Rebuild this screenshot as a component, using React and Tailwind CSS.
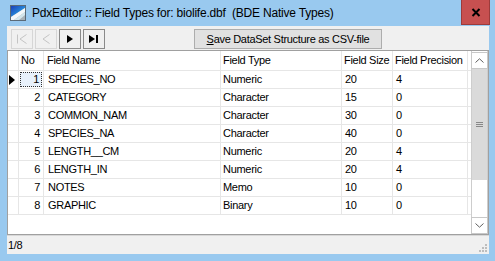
import React from 'react';

const rows = [
  { no: 1, name: 'SPECIES_NO', type: 'Numeric', size: 20, prec: 4 },
  { no: 2, name: 'CATEGORY', type: 'Character', size: 15, prec: 0 },
  { no: 3, name: 'COMMON_NAM', type: 'Character', size: 30, prec: 0 },
  { no: 4, name: 'SPECIES_NA', type: 'Character', size: 40, prec: 0 },
  { no: 5, name: 'LENGTH__CM', type: 'Numeric', size: 20, prec: 4 },
  { no: 6, name: 'LENGTH_IN', type: 'Numeric', size: 20, prec: 4 },
  { no: 7, name: 'NOTES', type: 'Memo', size: 10, prec: 0 },
  { no: 8, name: 'GRAPHIC', type: 'Binary', size: 10, prec: 0 },
];

const AppIcon = () => (
  <svg width="16" height="16" viewBox="0 0 16 16">
    <defs>
      <linearGradient id="blu" x1="0" y1="0" x2="1" y2="1">
        <stop offset="0" stopColor="#1c3fb8" />
        <stop offset="1" stopColor="#2ec0f0" />
      </linearGradient>
    </defs>
    <rect x="0.5" y="0.5" width="15" height="15" fill="#a9b2b8" stroke="#5a6a78" />
    <polygon points="1,1 15,1 15,3 1,12" fill="url(#blu)" />
    <polygon points="1,12 15,3 15,7 4,15 1,15" fill="#f4f8fa" />
    <polygon points="4,15 15,7 15,10 9,15" fill="#d4e6ec" />
  </svg>
);

const NavButton = ({ enabled, children }) => (
  <div
    className={`w-[22px] h-[20px] border flex items-center justify-center ${
      enabled ? 'border-[#8a8a8a]' : 'border-[#d6d6d6]'
    }`}
  >
    <svg width="20" height="18" viewBox="0 0 20 18">
      {children}
    </svg>
  </div>
);

const Cell = ({ w, className = '', children }) => (
  <div className={`${w} h-full border-r border-[#e6e6e6] flex items-center shrink-0 ${className}`}>
    {children}
  </div>
);

export default function App() {
  return (
    <div className="w-[495px] h-[261px] bg-[#99c9ef] flex flex-col overflow-hidden text-black font-['Liberation_Sans',Arial,sans-serif] text-[11px] tracking-[-0.3px]">
      {/* title bar */}
      <div className="h-[26px] flex shrink-0">
        <div className="flex-1 flex items-center pl-[10px]">
          <AppIcon />
          <span className="ml-[6px] text-[12px] tracking-[-0.2px] whitespace-pre">
            PdxEditor :: Field Types for: biolife.dbf  (BDE Native Types)
          </span>
        </div>
        <div className="w-[29px] h-[25px] mr-[5px] bg-[#c75050] border border-t-0 border-[#9c3b3b] flex items-center justify-center">
          <svg width="10" height="9" viewBox="0 0 10 9">
            <path d="M1.5 1 L8.5 8 M8.5 1 L1.5 8" stroke="#000" strokeWidth="2" />
          </svg>
        </div>
      </div>

      {/* client */}
      <div className="flex-1 ml-[7px] mr-[6px] mb-[7px] bg-[#f0f0f0] flex flex-col">
        {/* toolbar */}
        <div className="h-[24px] shrink-0 flex items-start pt-[3px] pl-[4px]">
          <div className="flex gap-[2px]">
            <NavButton>
              <path d="M5.5 4.5 V13.5" stroke="#c4c4c4" />
              <path d="M14.5 4.5 L8 9 L14.5 13.5" stroke="#c4c4c4" fill="none" />
            </NavButton>
            <NavButton>
              <path d="M13.5 4.5 L7 9 L13.5 13.5" stroke="#c4c4c4" fill="none" />
            </NavButton>
            <NavButton enabled>
              <polygon points="7,5 13,9 7,13" fill="#000" />
            </NavButton>
            <NavButton enabled>
              <polygon points="5,5 11,9 5,13" fill="#000" />
              <rect x="12" y="5" width="2" height="8" fill="#000" />
            </NavButton>
          </div>
          <button className="ml-[89px] w-[188px] h-[20px] bg-[#e1e1e1] border border-[#adadad] flex items-center justify-center text-[11px]">
            <span>
              <span className="underline">S</span>ave DataSet Structure as CSV-file
            </span>
          </button>
        </div>

        {/* grid */}
        <div className="flex-1 border border-[#a0a0a0] bg-white flex min-h-0">
          <div className="flex-1 flex flex-col">
            <div className="h-[20px] flex border-b border-[#e6e6e6] shrink-0">
              <Cell w="w-[11px]" />
              <Cell w="w-[25px]" className="pl-[2px]">No</Cell>
              <Cell w="w-[177px]" className="pl-[3px]">Field Name</Cell>
              <Cell w="w-[121px]" className="pl-[2px]">Field Type</Cell>
              <Cell w="w-[51px]" className="pl-[2px]">Field Size</Cell>
              <Cell w="w-[75px]" className="pl-[2px] whitespace-nowrap overflow-hidden">Field Precision</Cell>
            </div>
            {rows.map((r) => (
              <div key={r.no} className="h-[18px] flex border-b border-[#e6e6e6] shrink-0">
                <Cell w="w-[11px]" className="pl-[1px]">
                  {r.no === 1 && (
                    <svg width="6" height="10" viewBox="0 0 6 10">
                      <polygon points="0,0 6,5 0,10" fill="#000" />
                    </svg>
                  )}
                </Cell>
                <Cell w="w-[25px]" className="p-[1px]">
                  <div
                    className={`w-full h-full flex items-center justify-end pr-[2px] ${
                      r.no === 1 ? 'border border-dotted border-[#333] bg-[#e8f1fb]' : ''
                    }`}
                  >
                    {r.no}
                  </div>
                </Cell>
                <Cell w="w-[177px]" className="pl-[4px]">{r.name}</Cell>
                <Cell w="w-[121px]" className="pl-[2px]">{r.type}</Cell>
                <Cell w="w-[51px]" className="pl-[3px]">{r.size}</Cell>
                <Cell w="w-[75px]" className="pl-[3px]">{r.prec}</Cell>
              </div>
            ))}
          </div>

          {/* scrollbar */}
          <div className="w-[17px] shrink-0 flex flex-col pt-[1px] border-x border-[#cdcdcd]">
            <div className="h-[17px] bg-white border border-[#c8c8c8] -mx-px flex items-center justify-center">
              <svg width="9" height="5" viewBox="0 0 9 5">
                <path d="M0.5 4.5 L4.5 0.8 L8.5 4.5" stroke="#606060" fill="none" />
              </svg>
            </div>
            <div className="h-[111px] bg-[#dadada] flex items-center justify-center">
              <svg width="7" height="6" viewBox="0 0 7 6">
                <path d="M0 0.5 H7 M0 2.5 H7 M0 4.5 H7" stroke="#888" />
              </svg>
            </div>
            <div className="flex-1 bg-white" />
            <div className="h-[17px] bg-white border border-[#c8c8c8] -mx-px flex items-center justify-center">
              <svg width="9" height="5" viewBox="0 0 9 5">
                <path d="M0.5 0.5 L4.5 4.2 L8.5 0.5" stroke="#606060" fill="none" />
              </svg>
            </div>
          </div>
        </div>

        {/* status bar */}
        <div className="h-[19px] shrink-0 border-t border-[#d8d8d8] flex items-center pl-[1px] relative">
          <span>1/8</span>
          <svg className="absolute right-[2px] bottom-[2px]" width="8" height="8" viewBox="0 0 8 8">
            <rect x="6" y="0" width="2" height="2" fill="#bdbdbd" />
            <rect x="3" y="3" width="2" height="2" fill="#bdbdbd" />
            <rect x="6" y="3" width="2" height="2" fill="#bdbdbd" />
            <rect x="0" y="6" width="2" height="2" fill="#bdbdbd" />
            <rect x="3" y="6" width="2" height="2" fill="#bdbdbd" />
            <rect x="6" y="6" width="2" height="2" fill="#bdbdbd" />
          </svg>
        </div>
      </div>
    </div>
  );
}
